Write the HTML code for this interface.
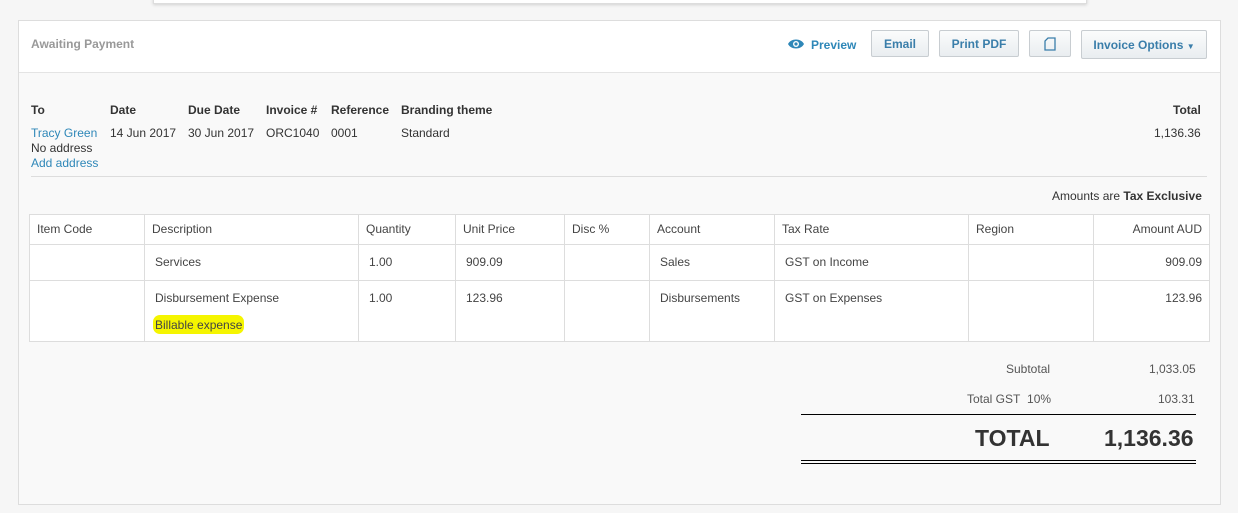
<!DOCTYPE html>
<html><head><style>
body{margin:0;width:1238px;height:513px;background:#f6f6f6;font-family:"Liberation Sans",Arial,sans-serif;font-size:12px;color:#333;position:relative;overflow:hidden}
.a{position:absolute;white-space:nowrap}
.topbar{left:153px;top:-6px;width:932px;height:8px;background:#fff;border:1px solid #ddd;box-shadow:0 1px 3px rgba(0,0,0,.15)}
.panel{left:18px;top:20px;width:1201px;height:483px;background:#f9f9f9;border:1px solid #ddd}
.head{left:19px;top:21px;width:1201px;height:51px;background:#fff;border-bottom:1px solid #e4e4e4}
.btn{top:30px;height:27px;border:1px solid #c8cdd1;border-radius:2px;background:linear-gradient(#fbfcfc,#e9edf0);color:#3a7eaa;font-weight:bold;font-size:12px;line-height:26px;text-align:center;box-sizing:border-box}
.blue{color:#2e87b8}
.hdr{font-weight:bold;top:103px}
table{position:absolute;left:29px;top:214px;border-collapse:collapse;background:#fff}
td{border:1px solid #ddd;padding:0 7px;vertical-align:top;color:#444}
</style></head><body>
<div class="a topbar"></div>
<div class="a panel"></div>
<div class="a head"></div>
<div class="a" style="left:31px;top:37px;color:#999;font-weight:bold">Awaiting Payment</div>
<svg class="a" style="left:788px;top:38px" width="16" height="12" viewBox="0 0 16 12"><path d="M0 6C3 0 13 0 16 6C13 12 3 12 0 6Z" fill="#2e87b8"/><circle cx="8" cy="6" r="3" fill="#fff"/><circle cx="8" cy="6" r="1.6" fill="#2e87b8"/></svg>
<div class="a blue" style="left:811px;top:38px;font-weight:bold">Preview</div>
<div class="a btn" style="left:871px;width:58px">Email</div>
<div class="a btn" style="left:939px;width:80px">Print PDF</div>
<div class="a btn" style="left:1029px;width:42px"><svg width="12" height="14" viewBox="0 0 12 14" style="margin-top:6px"><path d="M1 13V4L4 1H11V13Z" fill="none" stroke="#3a7eaa" stroke-width="1.3"/></svg></div>
<div class="a btn" style="left:1081px;width:126px;top:30px;height:29px;line-height:28px">Invoice Options <span style="font-size:8px">&#9660;</span></div>
<div class="a hdr" style="left:31px">To</div>
<div class="a hdr" style="left:110px">Date</div>
<div class="a hdr" style="left:188px">Due Date</div>
<div class="a hdr" style="left:266px">Invoice #</div>
<div class="a hdr" style="left:331px">Reference</div>
<div class="a hdr" style="left:401px">Branding theme</div>
<div class="a hdr" style="left:1173px">Total</div>
<div class="a blue" style="left:31px;top:126px">Tracy Green</div>
<div class="a" style="left:31px;top:141px">No address</div>
<div class="a blue" style="left:31px;top:156px">Add address</div>
<div class="a" style="left:110px;top:126px">14 Jun 2017</div>
<div class="a" style="left:188px;top:126px">30 Jun 2017</div>
<div class="a" style="left:266px;top:126px">ORC1040</div>
<div class="a" style="left:331px;top:126px">0001</div>
<div class="a" style="left:401px;top:126px">Standard</div>
<div class="a" style="left:1154px;top:126px">1,136.36</div>
<div class="a" style="left:31px;top:176px;width:1176px;border-top:1px solid #ddd"></div>
<div class="a" style="left:1052px;top:189px">Amounts are <b>Tax Exclusive</b></div>
<table>
<tr style="height:30px"><td style="width:100px;padding-top:7px">Item Code</td><td style="width:199px;padding-top:7px">Description</td><td style="width:82px;padding-top:7px">Quantity</td><td style="width:94px;padding-top:7px">Unit Price</td><td style="width:70px;padding-top:7px">Disc %</td><td style="width:110px;padding-top:7px">Account</td><td style="width:179px;padding-top:7px">Tax Rate</td><td style="width:110px;padding-top:7px">Region</td><td style="width:101px;padding-top:7px;text-align:right">Amount AUD</td></tr>
<tr style="height:36px"><td></td><td style="padding:10px 10px 0">Services</td><td style="padding:10px 10px 0">1.00</td><td style="padding:10px 10px 0">909.09</td><td></td><td style="padding:10px 10px 0">Sales</td><td style="padding:10px 10px 0">GST on Income</td><td></td><td style="padding-top:10px;text-align:right">909.09</td></tr>
<tr style="height:61px"><td></td><td style="padding:10px 10px 0">Disbursement Expense<div style="margin-top:10px;margin-left:-2px;display:inline-block;background:#f5f500;border-radius:7px;padding:3px 2px 2px;line-height:14px">Billable expense</div></td><td style="padding:10px 10px 0">1.00</td><td style="padding:10px 10px 0">123.96</td><td></td><td style="padding:10px 10px 0">Disbursements</td><td style="padding:10px 10px 0">GST on Expenses</td><td></td><td style="padding-top:10px;text-align:right">123.96</td></tr>
</table>
<div class="a" style="left:1006px;top:362px;color:#555">Subtotal</div>
<div class="a" style="left:1149px;top:362px;color:#555">1,033.05</div>
<div class="a" style="left:967px;top:392px;color:#555">Total GST&nbsp; 10%</div>
<div class="a" style="left:1158px;top:392px;color:#555">103.31</div>
<div class="a" style="left:801px;top:414px;width:395px;border-top:1px solid #000"></div>
<div class="a" style="left:975px;top:425px;font-size:23px;font-weight:bold;color:#333">TOTAL</div>
<div class="a" style="left:1104px;top:425px;font-size:23px;font-weight:bold;color:#333">1,136.36</div>
<div class="a" style="left:801px;top:460px;width:395px;height:2px;border-top:1px solid #000;border-bottom:1px solid #000"></div>
</body></html>
